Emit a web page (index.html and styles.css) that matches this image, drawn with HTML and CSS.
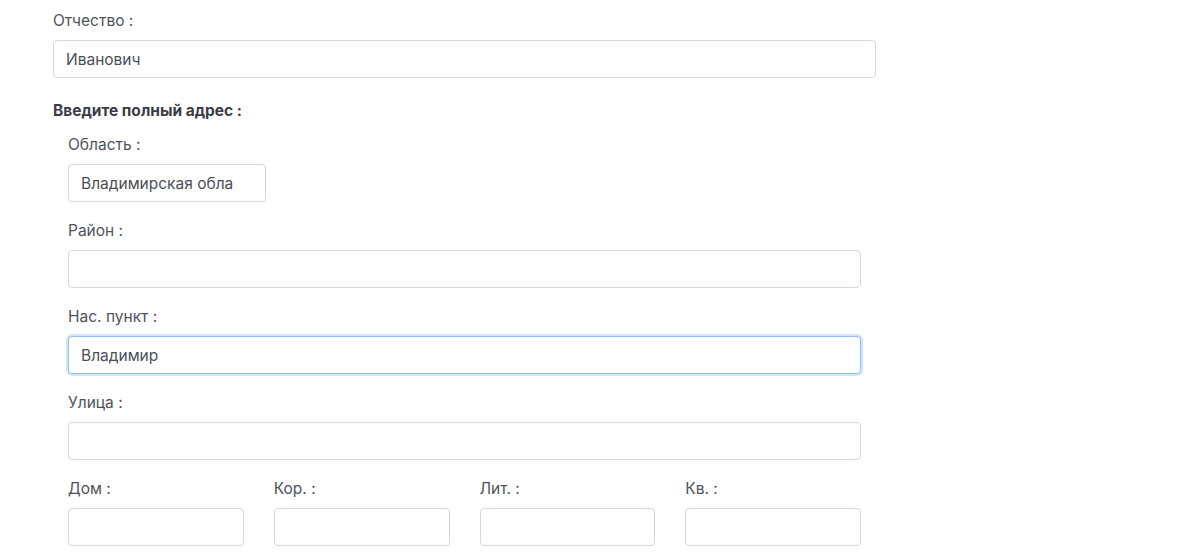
FILE: index.html
```html
<!DOCTYPE html>
<html lang="ru">
<head>
<meta charset="utf-8">
<link rel="stylesheet" href="styles.css">
</head>
<body>
<form class="form">
  <div class="field">
    <label class="label">Отчество :</label>
    <div class="input wide">Иванович</div>
  </div>
  <div class="heading">Введите полный адрес :</div>
  <div class="address">
    <div class="field">
      <label class="label">Область :</label>
      <div class="input short">Владимирская обла</div>
    </div>
    <div class="field">
      <label class="label">Район :</label>
      <div class="input"></div>
    </div>
    <div class="field">
      <label class="label">Нас. пункт :</label>
      <div class="input focus">Владимир</div>
    </div>
    <div class="field">
      <label class="label">Улица :</label>
      <div class="input"></div>
    </div>
    <div class="row">
      <div class="field">
        <label class="label">Дом :</label>
        <div class="input"></div>
      </div>
      <div class="field">
        <label class="label">Кор. :</label>
        <div class="input"></div>
      </div>
      <div class="field">
        <label class="label">Лит. :</label>
        <div class="input"></div>
      </div>
      <div class="field">
        <label class="label">Кв. :</label>
        <div class="input"></div>
      </div>
    </div>
  </div>
</form>
</body>
</html>
```

FILE: styles.css
```css
html, body {
  margin: 0;
  padding: 0;
  background: #ffffff;
}
body {
  font-family: Inter, "Noto Sans", "Liberation Sans", sans-serif;
  font-size: 15.5px;
  color: #50535a;
}
.form {
  padding: 10px 0 0 53px;
  width: 823px;
}
.field {
  display: flex;
  flex-direction: column;
  margin-bottom: 18px;
}
.label {
  display: block;
  line-height: 22px;
  height: 20px;
  margin-bottom: 10px;
  color: #50535a;
}
.input {
  box-sizing: border-box;
  height: 38px;
  border: 1px solid #d3d6da;
  border-radius: 4px;
  padding: 0 12px;
  line-height: 37px;
  color: #4b4f56;
  background: #fff;
  white-space: nowrap;
  overflow: hidden;
}
.wide {
  width: 823px;
}
.form > .field {
  margin-bottom: 22px;
}
.heading {
  font-weight: 700;
  line-height: 22px;
  height: 20px;
  color: #3a3d45;
  margin-bottom: 14px;
}
.address {
  padding-left: 15px;
  width: 793px;
}
.short {
  width: 198px;
}
.focus {
  border-color: #8fbff0;
  box-shadow: 0 0 0 2px rgba(100, 160, 230, 0.28);
}
.row {
  display: grid;
  grid-template-columns: repeat(4, 1fr);
  column-gap: 30px;
}
.row .field {
  margin-bottom: 0;
}
```
